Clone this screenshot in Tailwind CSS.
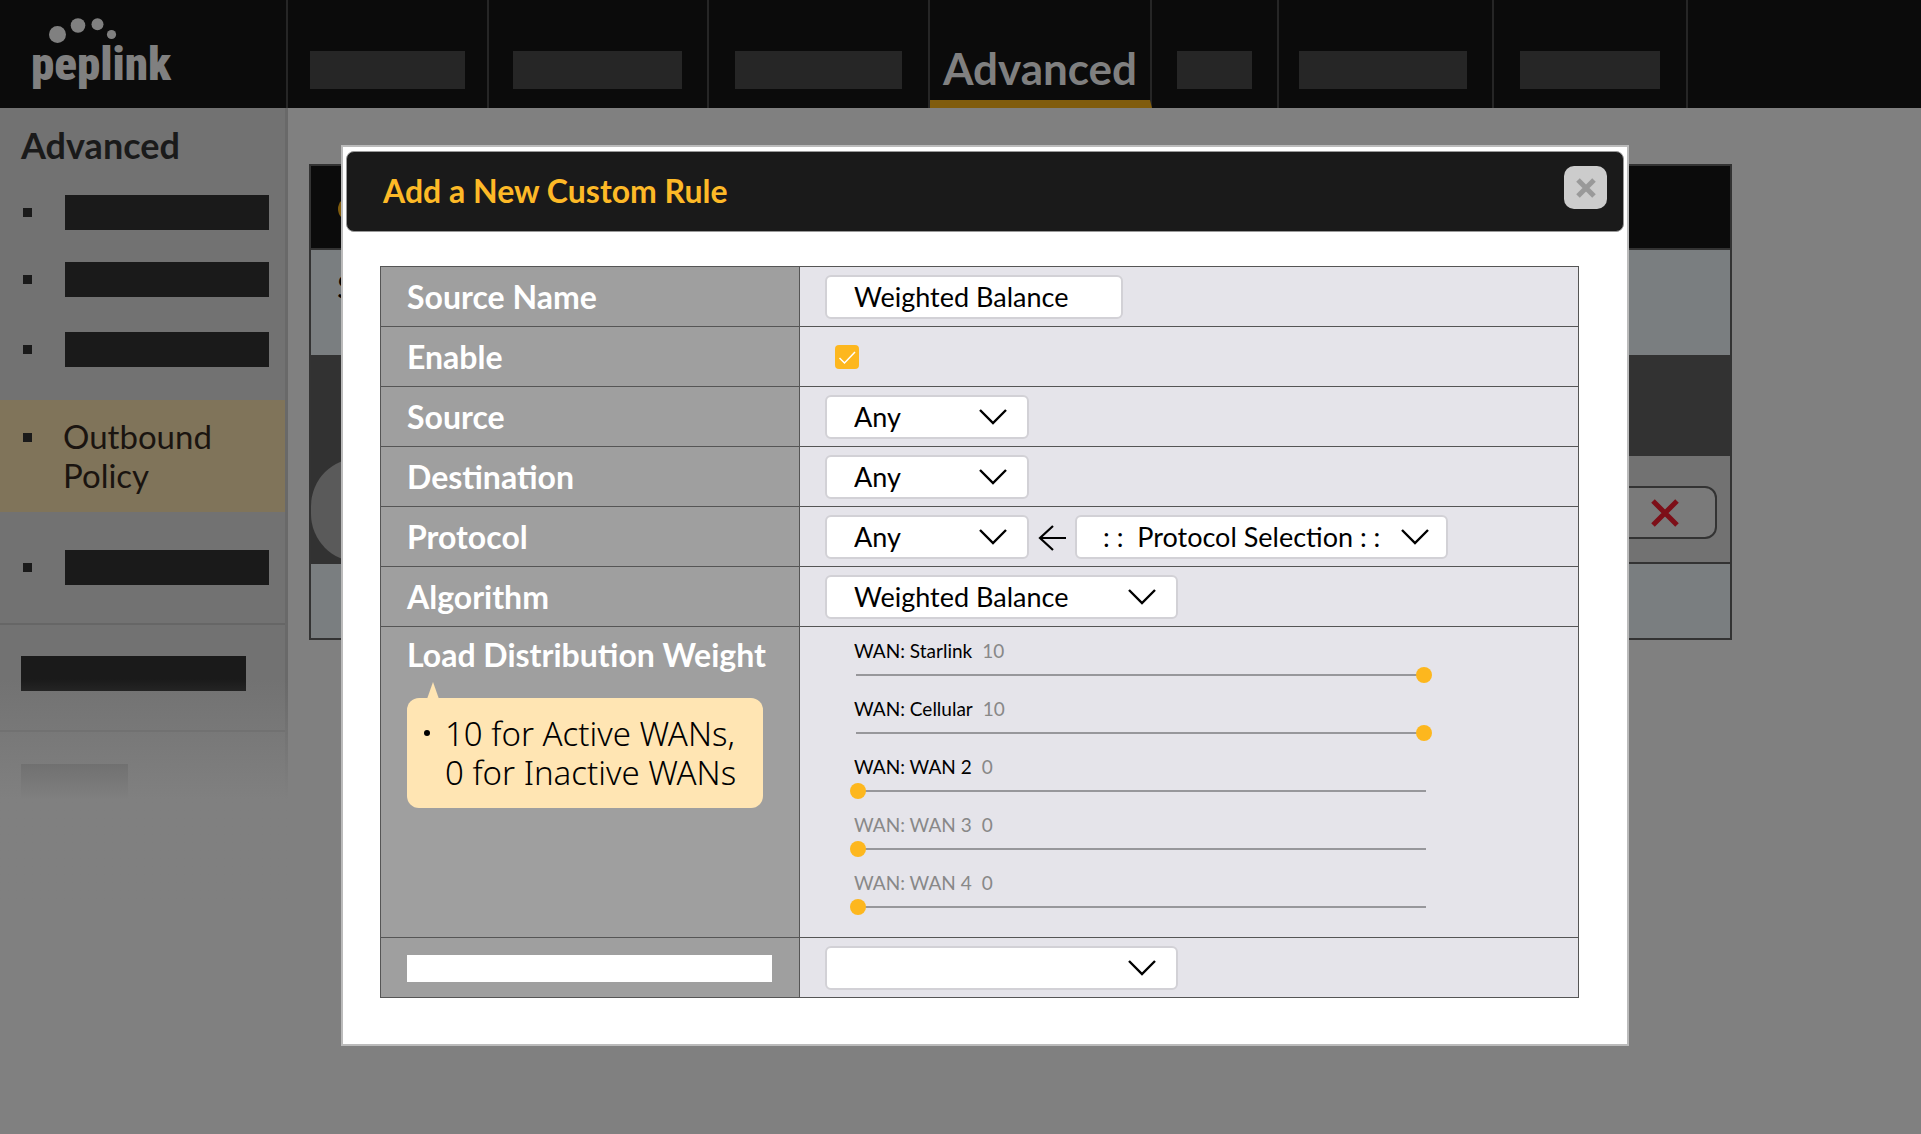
<!DOCTYPE html>
<html lang="en">

<head>
    <meta charset="UTF-8">
    <meta name="viewport" content="width=device-width, initial-scale=1.0">
    <title>Outbound Policy</title>
    <script src="https://cdn.jsdelivr.net/npm/@tailwindcss/browser@4"></script>
</head>

<body class="relative min-h-screen overflow-x-hidden bg-[#808080] font-['Lato',sans-serif] text-black">
    <header class="flex h-[108px] bg-[#0b0b0b]">
        <a href="#" aria-label="peplink" class="relative block w-[288px] shrink-0 border-r-2 border-[#262626] text-[#808080]">
            <svg class="absolute left-[48px] top-[17px]" width="72" height="36" viewBox="0 0 72 36" fill="currentColor">
                <circle cx="9.500" cy="17.500" r="8.500" />
                <circle cx="30" cy="8.500" r="7.300" />
                <circle cx="49.500" cy="7.300" r="6" />
                <circle cx="63.500" cy="17.500" r="4.600" />
            </svg>
            <span class="absolute left-[31px] top-[36px] text-[47px] leading-[56px] font-black font-['Roboto_Condensed','Roboto',sans-serif]">peplink</span>
        </a>
        <nav class="flex">
            <a href="#" aria-label="Tab 1" class="flex items-start border-r-2 border-[#262626] pt-[51px] pl-[22px] pr-[22px]"><span class="h-[38px] w-[155px] bg-[#262626]"></span></a>
            <a href="#" aria-label="Tab 2" class="flex items-start border-r-2 border-[#262626] pt-[51px] pl-[24px] pr-[25px]"><span class="h-[38px] w-[169px] bg-[#262626]"></span></a>
            <a href="#" aria-label="Tab 3" class="flex items-start border-r-2 border-[#262626] pt-[51px] pl-[26px] pr-[26px]"><span class="h-[38px] w-[167px] bg-[#262626]"></span></a>
            <a href="#" class="flex w-[222px] items-end justify-center border-r-2 border-b-8 border-r-[#262626] border-b-[#805c0d] pb-[5px] text-[44px] leading-[54px] font-bold text-[#808080]">Advanced</a>
            <a href="#" aria-label="Tab 5" class="flex items-start border-r-2 border-[#262626] pt-[51px] pl-[25px] pr-[25px]"><span class="h-[38px] w-[75px] bg-[#262626]"></span></a>
            <a href="#" aria-label="Tab 6" class="flex items-start border-r-2 border-[#262626] pt-[51px] pl-[20px] pr-[25px]"><span class="h-[38px] w-[168px] bg-[#262626]"></span></a>
            <a href="#" aria-label="Tab 7" class="flex items-start border-r-2 border-[#262626] pt-[51px] pl-[26px] pr-[26px]"><span class="h-[38px] w-[140px] bg-[#262626]"></span></a>
        </nav>
    </header>

    <div class="flex items-start">
        <aside class="relative w-[288px] shrink-0 bg-[#727272] pb-[100px]">
            <div class="border-r-3 border-[#696969]">
                <h2 class="pt-4 pl-[21px] text-[36px] leading-[42px] font-bold text-[#1a1a1a]">Advanced</h2>
                <ul>
                    <li class="mt-[29px] flex h-[35px] items-center gap-[33px] pl-[23px]"><span class="size-[9px] bg-[#1a1a1a]"></span><span class="h-[35px] w-[204px] bg-[#1a1a1a]"></span></li>
                    <li class="mt-8 flex h-[35px] items-center gap-[33px] pl-[23px]"><span class="size-[9px] bg-[#1a1a1a]"></span><span class="h-[35px] w-[204px] bg-[#1a1a1a]"></span></li>
                    <li class="mt-[35px] flex h-[35px] items-center gap-[33px] pl-[23px]"><span class="size-[9px] bg-[#1a1a1a]"></span><span class="h-[35px] w-[204px] bg-[#1a1a1a]"></span></li>
                    <li class="mt-[33px] flex h-[112px] items-start gap-[31px] bg-[#80745a] pt-[17px] pl-[23px]">
                        <span class="mt-4 size-[9px] bg-[#1a1a1a]"></span>
                        <a href="#" class="text-[33px] leading-[39px] text-[#1a1410]">Outbound<br>Policy</a>
                    </li>
                    <li class="mt-[38px] flex h-[35px] items-center gap-[33px] pl-[23px]"><span class="size-[9px] bg-[#1a1a1a]"></span><span class="h-[35px] w-[204px] bg-[#1a1a1a]"></span></li>
                </ul>
                <div class="mt-[38px] border-t-2 border-[#666] pt-[31px] pl-[21px]">
                    <div class="h-[35px] w-[225px] bg-[#1a1a1a]"></div>
                </div>
                <div class="mt-[39px] border-t-2 border-[#666] pt-8 pl-[21px]">
                    <div class="h-[35px] w-[107px] bg-[#4c4c4c]"></div>
                </div>
            </div>
            <!-- menu fades out towards the bottom -->
            <div class="absolute inset-x-0 bottom-0 h-[220px] bg-linear-to-b from-[#808080]/0 to-[#808080] to-55%"></div>
        </aside>

        <main class="mt-[56px] mr-[189px] ml-[21px] flex-1 border-2 border-[#333]">
            <div class="flex h-[84px] items-center border-b-2 border-[#333] bg-[#0b0b0b] pt-1 pl-[27px]"><span class="size-6 rounded-full bg-[#805c0d]"></span></div>
            <div class="h-[105px] bg-[#7a7e80] pt-[12px] pl-[26px] text-[33px]">S</div>
            <div class="flex h-[209px] bg-[#323232]">
                <div class="flex w-[200px] items-end pb-[2px]"><span class="h-[104px] w-full rounded-[48px] bg-[#5a5a5a]"></span></div>
                <div class="mt-[101px] flex flex-1 justify-end border-b-2 border-[#333] bg-[#727272] pt-[30px] pr-[13px]">
                    <button aria-label="Delete" class="flex h-[53px] w-[200px] items-center justify-end rounded-xl border-2 border-[#333] bg-[#7a7a7a] pr-[36px]">
                        <svg width="28" height="28" viewBox="0 0 28 28" stroke="#7d0f18" stroke-width="5"><path d="M2 2L26 26M26 2L2 26" /></svg>
                    </button>
                </div>
            </div>
            <div class="h-[74px] bg-[#7a7e80]"></div>
        </main>
    </div>

    <div role="dialog" aria-labelledby="dialog-title" class="absolute top-[145px] right-[292px] left-[341px] border-2 border-[#bbb] bg-white">
        <div class="m-[3px] mt-1 flex h-[81px] items-center justify-between rounded-lg border border-[#999] bg-[#1a1a1a] pr-4 pl-[36px]">
            <h1 id="dialog-title" class="mb-[2px] text-[32px] leading-9 font-bold text-[#fdb927]">Add a New Custom Rule</h1>
            <button aria-label="Close" class="mb-2 grid size-[43px] place-items-center rounded-[10px] bg-[#ccc]">
                <svg width="20" height="20" viewBox="0 0 20 20" stroke="#999" stroke-width="5"><path d="M2 2L18 18M18 2L2 18" /></svg>
            </button>
        </div>

        <form class="pt-[31px] pr-[48px] pb-[46px] pl-[37px]">
            <table class="w-full border-collapse border border-[#555] bg-[#e5e4ea] text-[27px] leading-8">
                <tbody>
                    <tr class="h-[60px] border-b border-[#555]">
                        <th class="w-[419px] border-r border-[#555] bg-[#9f9f9f] pl-[26px] text-left text-[32px] font-bold text-white"><label for="name">Source Name</label></th>
                        <td class="pl-[25px]"><input id="name" type="text" value="Weighted Balance" class="block h-11 w-[298px] rounded-md border-2 border-[#d2d1d6] bg-white pl-[27px]"></td>
                    </tr>
                    <tr class="h-[60px] border-b border-[#555]">
                        <th class="border-r border-[#555] bg-[#9f9f9f] pl-[26px] text-left text-[32px] font-bold text-white"><label for="enable">Enable</label></th>
                        <td class="pl-[35px]">
                            <div class="relative size-6">
                                <input id="enable" type="checkbox" checked class="block size-6 appearance-none rounded bg-[#fdb71e]">
                                <svg class="pointer-events-none absolute inset-0" width="24" height="24" viewBox="0 0 24 24" fill="none" stroke="#fff" stroke-width="1.500"><path d="M4.500 13L9.500 18L20 7" /></svg>
                            </div>
                        </td>
                    </tr>
                    <tr class="h-[60px] border-b border-[#555]">
                        <th class="border-r border-[#555] bg-[#9f9f9f] pl-[26px] text-left text-[32px] font-bold text-white"><label for="source">Source</label></th>
                        <td class="pl-[25px]">
                            <div class="relative w-[204px]">
                                <select id="source" class="block h-11 w-full appearance-none rounded-md border-2 border-[#d2d1d6] bg-white pl-[27px]"><option>Any</option></select>
                                <svg class="pointer-events-none absolute top-[14px] right-[22px]" width="28" height="16" viewBox="0 0 28 16" fill="none" stroke="#000" stroke-width="2.400"><path d="M1 1L14 14L27 1" /></svg>
                            </div>
                        </td>
                    </tr>
                    <tr class="h-[60px] border-b border-[#555]">
                        <th class="border-r border-[#555] bg-[#9f9f9f] pl-[26px] text-left text-[32px] font-bold text-white"><label for="destination">Destination</label></th>
                        <td class="pl-[25px]">
                            <div class="relative w-[204px]">
                                <select id="destination" class="block h-11 w-full appearance-none rounded-md border-2 border-[#d2d1d6] bg-white pl-[27px]"><option>Any</option></select>
                                <svg class="pointer-events-none absolute top-[14px] right-[22px]" width="28" height="16" viewBox="0 0 28 16" fill="none" stroke="#000" stroke-width="2.400"><path d="M1 1L14 14L27 1" /></svg>
                            </div>
                        </td>
                    </tr>
                    <tr class="h-[60px] border-b border-[#555]">
                        <th class="border-r border-[#555] bg-[#9f9f9f] pl-[26px] text-left text-[32px] font-bold text-white"><label for="protocol">Protocol</label></th>
                        <td class="pl-[25px]">
                            <div class="flex items-center">
                                <div class="relative w-[204px]">
                                    <select id="protocol" class="block h-11 w-full appearance-none rounded-md border-2 border-[#d2d1d6] bg-white pl-[27px]"><option>Any</option></select>
                                    <svg class="pointer-events-none absolute top-[14px] right-[22px]" width="28" height="16" viewBox="0 0 28 16" fill="none" stroke="#000" stroke-width="2.400"><path d="M1 1L14 14L27 1" /></svg>
                                </div>
                                <svg class="mx-[9px]" width="28" height="28" viewBox="0 0 28 28" fill="none" stroke="#000" stroke-width="2.200"><path d="M28 15H2M15 3L2 15L15 27" /></svg>
                                <div class="relative w-[373px]">
                                    <select aria-label="Protocol selection" class="block h-11 w-full appearance-none rounded-md border-2 border-[#d2d1d6] bg-white pl-[26px]"><option>: :&nbsp; Protocol Selection : :</option></select>
                                    <svg class="pointer-events-none absolute top-[14px] right-[19px]" width="28" height="16" viewBox="0 0 28 16" fill="none" stroke="#000" stroke-width="2.400"><path d="M1 1L14 14L27 1" /></svg>
                                </div>
                            </div>
                        </td>
                    </tr>
                    <tr class="h-[60px] border-b border-[#555]">
                        <th class="border-r border-[#555] bg-[#9f9f9f] pl-[26px] text-left text-[32px] font-bold text-white"><label for="algorithm">Algorithm</label></th>
                        <td class="pl-[25px]">
                            <div class="relative w-[353px]">
                                <select id="algorithm" class="block h-11 w-full appearance-none rounded-md border-2 border-[#d2d1d6] bg-white pl-[27px]"><option>Weighted Balance</option></select>
                                <svg class="pointer-events-none absolute top-[14px] right-[22px]" width="28" height="16" viewBox="0 0 28 16" fill="none" stroke="#000" stroke-width="2.400"><path d="M1 1L14 14L27 1" /></svg>
                            </div>
                        </td>
                    </tr>
                    <tr class="h-[311px] border-b border-[#555] align-top">
                        <th class="border-r border-[#555] bg-[#9f9f9f] pt-3 pl-[26px] text-left text-[32px] font-bold text-white">
                            Load Distribution Weight
                            <div class="relative mt-[27px] w-[356px] rounded-xl bg-[#ffe5b3] pt-[16px] pb-[16px] pl-[38px] text-[33px] leading-[39px] font-light text-black font-['Noto_Sans',sans-serif]">
                                <svg class="absolute -top-4 left-5" width="12" height="17" viewBox="0 0 12 17" fill="#ffe5b3"><path d="M6 0L12 17H0Z" /></svg>
                                <span class="absolute top-[32px] left-[17px] size-[6px] rounded-full bg-black"></span>
                                <p>10 for Active WANs,</p>
                                <p>0 for Inactive WANs</p>
                            </div>
                        </th>
                        <td class="pt-[12px] pl-[50px] text-[19px] leading-6">
                            <div class="mb-1 pl-1">
                                <label for="wan1">WAN: Starlink</label><output class="ml-[10px] text-[#888]">10</output>
                            </div>
                            <input id="wan1" type="range" min="0" max="10" value="10" class="mb-[14px] block h-4 w-[582px] appearance-none bg-[linear-gradient(#97979b,#97979b)] bg-[length:570px_2px] bg-center bg-no-repeat [&::-webkit-slider-thumb]:size-4 [&::-webkit-slider-thumb]:appearance-none [&::-webkit-slider-thumb]:rounded-full [&::-webkit-slider-thumb]:bg-[#fdb71e]">
                            <div class="mb-1 pl-1">
                                <label for="wan2">WAN: Cellular</label><output class="ml-[10px] text-[#888]">10</output>
                            </div>
                            <input id="wan2" type="range" min="0" max="10" value="10" class="mb-[14px] block h-4 w-[582px] appearance-none bg-[linear-gradient(#97979b,#97979b)] bg-[length:570px_2px] bg-center bg-no-repeat [&::-webkit-slider-thumb]:size-4 [&::-webkit-slider-thumb]:appearance-none [&::-webkit-slider-thumb]:rounded-full [&::-webkit-slider-thumb]:bg-[#fdb71e]">
                            <div class="mb-1 pl-1">
                                <label for="wan3">WAN: WAN 2</label><output class="ml-[10px] text-[#888]">0</output>
                            </div>
                            <input id="wan3" type="range" min="0" max="10" value="0" class="mb-[14px] block h-4 w-[582px] appearance-none bg-[linear-gradient(#97979b,#97979b)] bg-[length:570px_2px] bg-center bg-no-repeat [&::-webkit-slider-thumb]:size-4 [&::-webkit-slider-thumb]:appearance-none [&::-webkit-slider-thumb]:rounded-full [&::-webkit-slider-thumb]:bg-[#fdb71e]">
                            <div class="mb-1 pl-1 text-[#888]">
                                <label for="wan4">WAN: WAN 3</label><output class="ml-[10px]">0</output>
                            </div>
                            <input id="wan4" type="range" min="0" max="10" value="0" class="mb-[14px] block h-4 w-[582px] appearance-none bg-[linear-gradient(#97979b,#97979b)] bg-[length:570px_2px] bg-center bg-no-repeat [&::-webkit-slider-thumb]:size-4 [&::-webkit-slider-thumb]:appearance-none [&::-webkit-slider-thumb]:rounded-full [&::-webkit-slider-thumb]:bg-[#fdb71e]">
                            <div class="mb-1 pl-1 text-[#888]">
                                <label for="wan5">WAN: WAN 4</label><output class="ml-[10px]">0</output>
                            </div>
                            <input id="wan5" type="range" min="0" max="10" value="0" class="block h-4 w-[582px] appearance-none bg-[linear-gradient(#97979b,#97979b)] bg-[length:570px_2px] bg-center bg-no-repeat [&::-webkit-slider-thumb]:size-4 [&::-webkit-slider-thumb]:appearance-none [&::-webkit-slider-thumb]:rounded-full [&::-webkit-slider-thumb]:bg-[#fdb71e]">
                        </td>
                    </tr>
                    <tr class="h-[60px]">
                        <th class="border-r border-[#555] bg-[#9f9f9f] pt-[2px] pl-[26px]"><div class="h-[27px] w-[365px] bg-white"></div></th>
                        <td class="pl-[25px]">
                            <div class="relative w-[353px]">
                                <select aria-label="Option" class="block h-11 w-full appearance-none rounded-md border-2 border-[#d2d1d6] bg-white pl-[27px]"><option></option></select>
                                <svg class="pointer-events-none absolute top-[14px] right-[22px]" width="28" height="16" viewBox="0 0 28 16" fill="none" stroke="#000" stroke-width="2.400"><path d="M1 1L14 14L27 1" /></svg>
                            </div>
                        </td>
                    </tr>
                </tbody>
            </table>
        </form>
    </div>
</body>

</html>
